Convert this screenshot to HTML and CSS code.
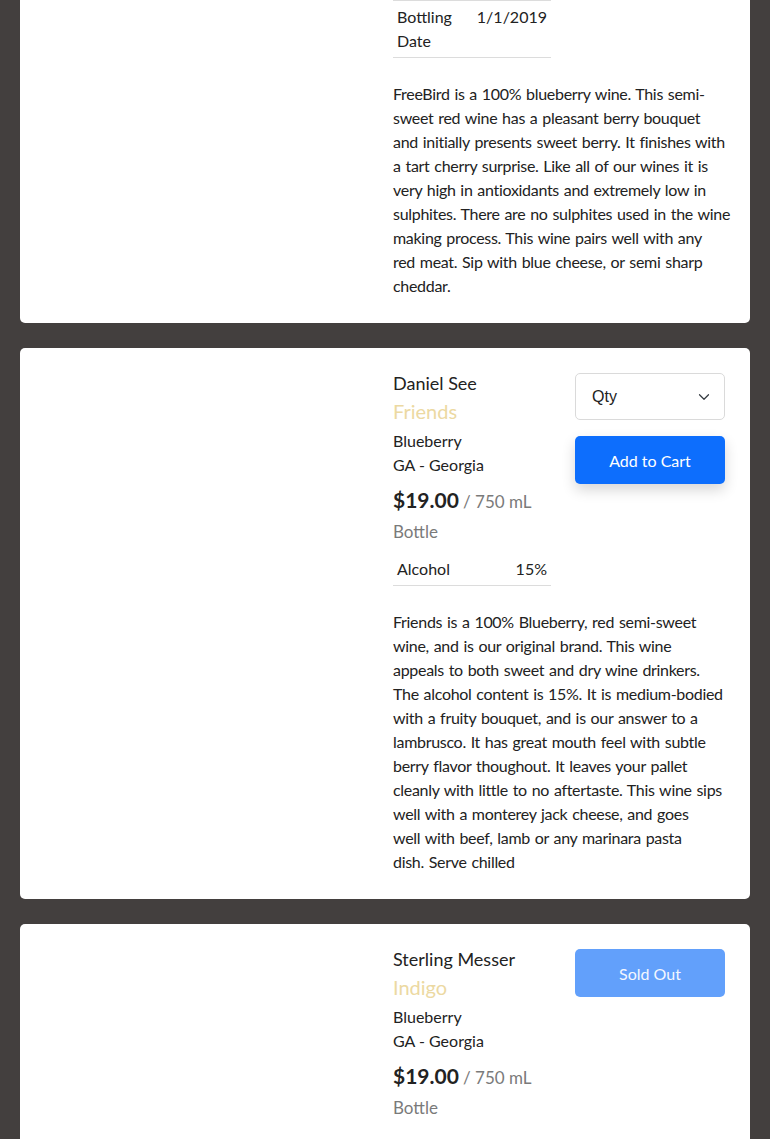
FILE: index.html
```html
<!DOCTYPE html>
<html lang="en">
<head>
<meta charset="utf-8">
<title>Wines</title>
<link rel="stylesheet" href="styles.css">
</head>
<body>
<div class="list">
  <div class="card">
    <div class="photo"></div>
    <div class="main">
      <div class="top">
        <div class="info">
          <div class="maker">Daniel See</div>
          <div class="wine">FreeBird</div>
          <div class="line">Blueberry</div>
          <div class="line">GA - Georgia</div>
          <div class="price"><span class="amount">$19.00</span> <span class="unit">/ 750 mL Bottle</span></div>
          <table class="specs">
            <tr><td>Alcohol</td><td class="val">12%</td></tr>
            <tr><td>Bottling Date</td><td class="val">1/1/2019</td></tr>
          </table>
        </div>
        <div class="actions">
          <div class="qty"><span>Qty</span><svg width="12" height="12" viewBox="0 0 16 16"><path d="M2 5l6 6 6-6" fill="none" stroke="#343a40" stroke-width="1.6" stroke-linecap="round" stroke-linejoin="round"/></svg></div>
          <button class="btn cart">Add to Cart</button>
        </div>
      </div>
      <p class="desc">FreeBird is a 100% blueberry wine. This semi-<br>sweet red wine has a pleasant berry bouquet<br>and initially presents sweet berry. It finishes with<br>a tart cherry surprise. Like all of our wines it is<br>very high in antioxidants and extremely low in<br>sulphites. There are no sulphites used in the wine<br>making process. This wine pairs well with any<br>red meat. Sip with blue cheese, or semi sharp<br>cheddar.</p>
    </div>
  </div>

  <div class="card">
    <div class="photo"></div>
    <div class="main">
      <div class="top">
        <div class="info">
          <div class="maker">Daniel See</div>
          <div class="wine">Friends</div>
          <div class="line">Blueberry</div>
          <div class="line">GA - Georgia</div>
          <div class="price"><span class="amount">$19.00</span> <span class="unit">/ 750 mL Bottle</span></div>
          <table class="specs">
            <tr><td>Alcohol</td><td class="val">15%</td></tr>
          </table>
        </div>
        <div class="actions">
          <div class="qty"><span>Qty</span><svg width="12" height="12" viewBox="0 0 16 16"><path d="M2 5l6 6 6-6" fill="none" stroke="#343a40" stroke-width="1.6" stroke-linecap="round" stroke-linejoin="round"/></svg></div>
          <button class="btn cart">Add to Cart</button>
        </div>
      </div>
      <p class="desc">Friends is a 100% Blueberry, red semi-sweet<br>wine, and is our original brand. This wine<br>appeals to both sweet and dry wine drinkers.<br>The alcohol content is 15%. It is medium-bodied<br>with a fruity bouquet, and is our answer to a<br>lambrusco. It has great mouth feel with subtle<br>berry flavor thoughout. It leaves your pallet<br>cleanly with little to no aftertaste. This wine sips<br>well with a monterey jack cheese, and goes<br>well with beef, lamb or any marinara pasta<br>dish. Serve chilled</p>
    </div>
  </div>

  <div class="card">
    <div class="photo"></div>
    <div class="main">
      <div class="top">
        <div class="info">
          <div class="maker">Sterling Messer</div>
          <div class="wine">Indigo</div>
          <div class="line">Blueberry</div>
          <div class="line">GA - Georgia</div>
          <div class="price"><span class="amount">$19.00</span> <span class="unit">/ 750 mL Bottle</span></div>
          <table class="specs">
            <tr><td>Alcohol</td><td class="val">15%</td></tr>
          </table>
        </div>
        <div class="actions">
          <button class="btn sold">Sold Out</button>
        </div>
      </div>
      <p class="desc">Indigo is a 100% blueberry wine.</p>
    </div>
  </div>
</div>
</body>
</html>
```
FILE: styles.css
```css
html, body {
  margin: 0;
  padding: 0;
  background: #433f3e;
}
body {
  font-family: Lato, "Liberation Sans", sans-serif;
  color: #222;
  font-size: 16px;
  line-height: 24px;
  overflow: hidden;
}
.list {
  display: flex;
  flex-direction: column;
  gap: 25px;
  padding: 0 20px;
  margin-top: -237px;
}
.card {
  background: #fff;
  border-radius: 5px;
  padding: 25px;
  display: grid;
  grid-template-columns: 324px 1fr;
  column-gap: 24px;
}
.top {
  display: flex;
  gap: 24px;
}
.info {
  width: 158px;
}
.actions {
  width: 150px;
  display: flex;
  flex-direction: column;
  gap: 16px;
}
.maker {
  font-size: 18px;
  line-height: 20px;
}
.wine {
  font-size: 20px;
  line-height: 24px;
  margin: 6px 0;
  color: #ecd9a2;
}
.price {
  margin-top: 8px;
  line-height: 30px;
}
.amount {
  font-size: 21px;
  font-weight: 700;
}
.unit {
  font-size: 17px;
  color: #7a7a7a;
}
.specs {
  width: 100%;
  border-collapse: collapse;
  margin-top: 6px;
}
.specs td {
  padding: 4px;
  border-bottom: 1px solid #dcdcdc;
  vertical-align: top;
}
.specs td.val {
  text-align: right;
}
.desc {
  margin: 24px 0 0;
  letter-spacing: -0.3px;
  word-spacing: 1px;
  white-space: nowrap;
}
.qty {
  height: 47px;
  box-sizing: border-box;
  border: 1px solid #dadada;
  border-radius: 5px;
  padding: 0 14px 0 16px;
  display: flex;
  align-items: center;
  justify-content: space-between;
  font-family: "Liberation Sans", Arial, sans-serif;
  font-size: 16px;
}
.btn {
  height: 48px;
  border: 0;
  border-radius: 5px;
  color: #fff;
  font-family: inherit;
  font-size: 16px;
}
.cart {
  background: #0d6efd;
  box-shadow: 0 6px 14px rgba(0, 0, 0, 0.16);
}
.sold {
  background: #62a0fb;
  color: #f3f7ff;
}
```
